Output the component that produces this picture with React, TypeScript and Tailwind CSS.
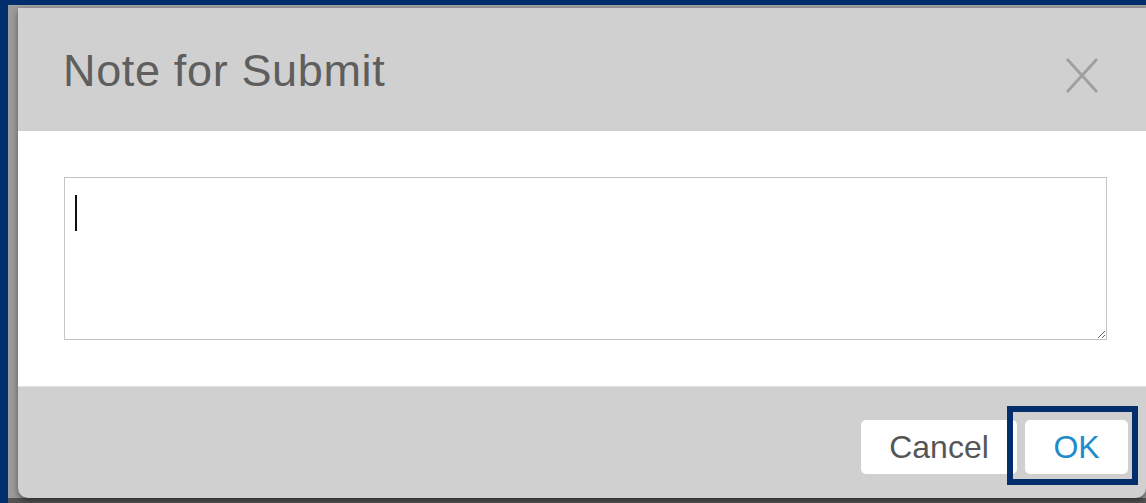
import React from "react";

export default function App() {
  return (
    <div className="relative w-[1146px] h-[503px] overflow-hidden bg-[#545454] font-['Liberation_Sans',Arial,sans-serif]">
      <div className="flex flex-col h-full border-solid border-t-[5px] border-l-[8px] border-[#022f6b]">
        {/* dimmed page behind the modal */}
        <div className="flex bg-[#9b9b9b] pt-[2px] pl-[10px] border-t-[1px] border-[#a3a3a3]">
          <div className="flex flex-col w-[1128px] h-[490px] bg-[#d0d0d0] rounded-b-[10px] shadow-[0_3px_6px_rgba(0,0,0,0.45)]">
            {/* header */}
            <div className="flex justify-between items-start h-[123px] pl-[45px] pr-[47px] pt-[40px]">
              <h1 className="text-[45px] leading-none tracking-[0.65px] text-[#5e5e5e] font-normal">
                Note for Submit
              </h1>
              <svg
                width="34"
                height="35"
                viewBox="0 0 34 35"
                className="mt-[10px]"
                fill="none"
                stroke="#9f9f9f"
                strokeWidth="2.8"
              >
                <line x1="2" y1="1" x2="32" y2="34" />
                <line x1="32" y1="1" x2="2" y2="34" />
              </svg>
            </div>

            {/* body */}
            <div className="bg-white h-[255px] pt-[46px] pl-[46px] pr-[39px]">
              <div className="relative">
                <textarea
                  readOnly
                  className="block w-full h-[163px] border border-solid border-[#c4c4c4] bg-white outline-none resize-y"
                />
                <div className="pointer-events-none absolute left-[11px] top-[18px] w-[2px] h-[36px] bg-[#111]" />
              </div>
            </div>

            {/* footer */}
            <div className="flex justify-end items-start gap-[8px] h-[112px] pt-[33px] pr-[18px] border-t border-[#e2e2e2]">
              <button className="w-[156px] h-[54px] rounded-[5px] bg-white text-[32px] leading-none text-[#565656]">
                Cancel
              </button>
              <div className="relative">
                <button className="w-[103px] h-[54px] rounded-[5px] bg-white text-[32px] leading-none text-[#1f8ccb]">
                  OK
                </button>
                <div className="pointer-events-none absolute -left-[18px] -top-[14px] -right-[10px] -bottom-[11px] border-[6px] border-solid border-[#022f6b]" />
              </div>
            </div>
          </div>
        </div>
      </div>
    </div>
  );
}
